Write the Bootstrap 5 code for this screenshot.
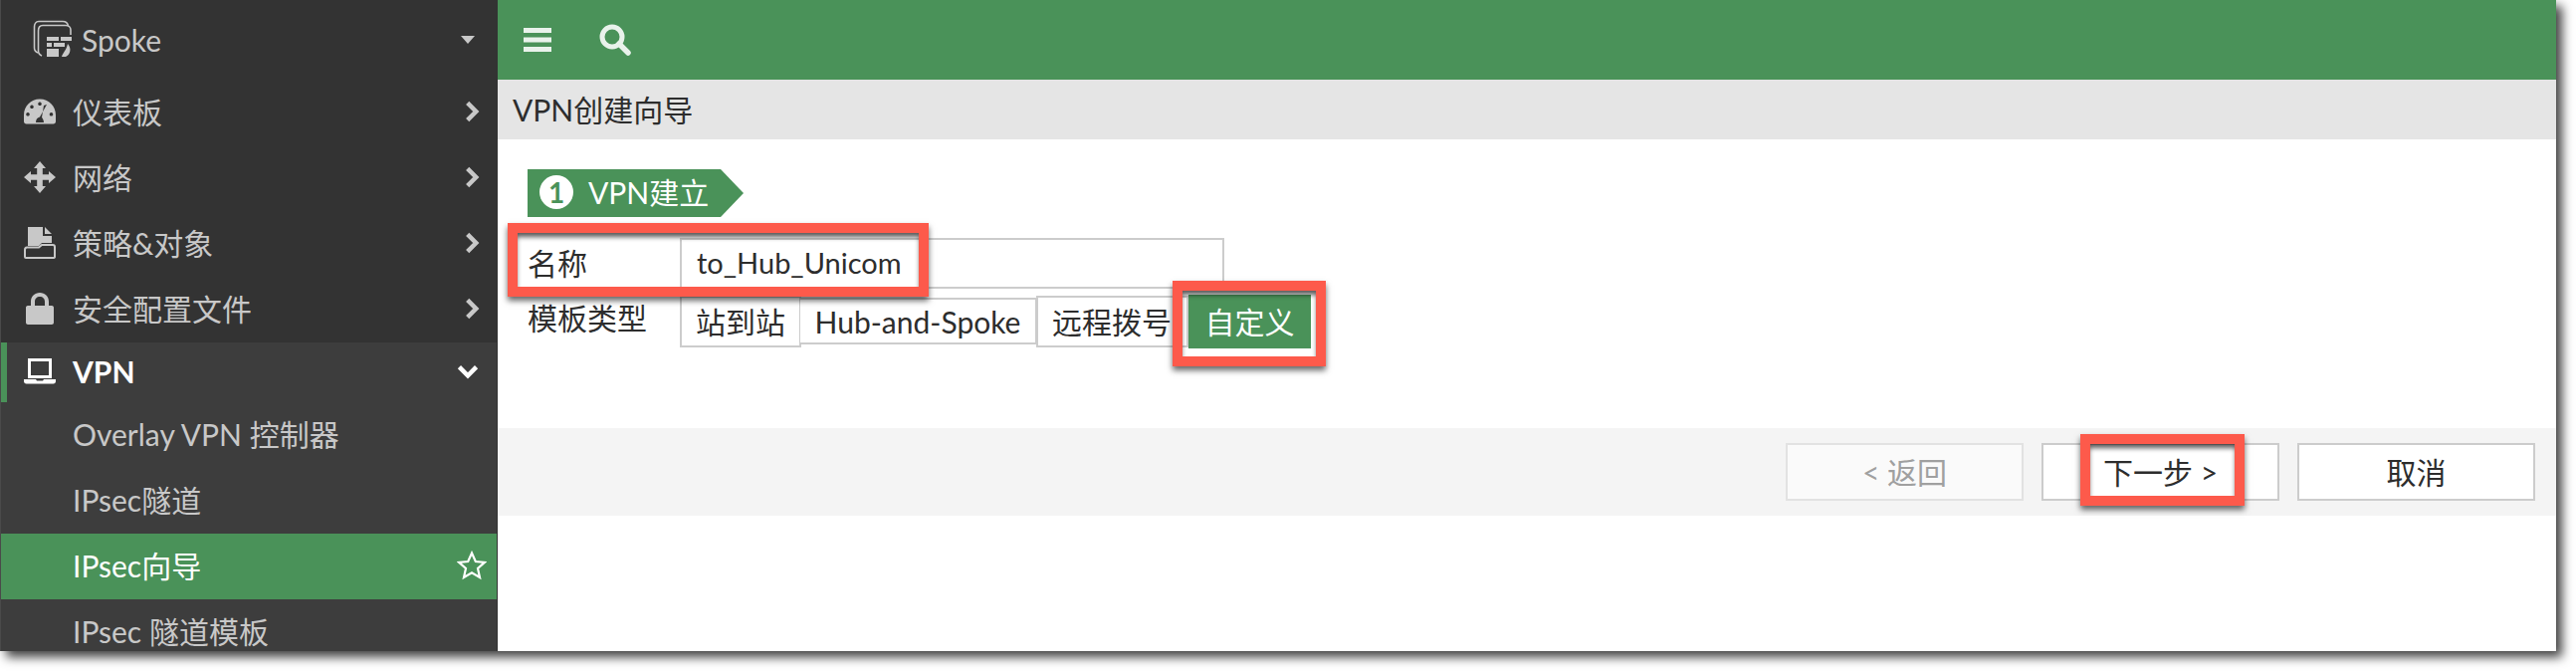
<!DOCTYPE html>
<html lang="zh-CN">
<head>
    <meta charset="UTF-8">
    <title>VPN创建向导</title>
    <link href="https://cdn.jsdelivr.net/npm/bootstrap@5.3.2/dist/css/bootstrap.min.css" rel="stylesheet">
    <style>
        :root {
            --fg-green: #4a9259;
            --side-dark: #333333;
            --side-sub: #3d3d3d;
            --side-text: #c8c8c8;
            --line: #cccccc;
            --mark-red: #fd5a4b;
        }

        html, body {
            height: 674px;
            overflow: hidden;
            background: #fff;
        }

        body {
            font-family: Lato, "Noto Sans CJK SC", sans-serif;
            font-size: 30px;
            color: #2d2d2d;
        }

        .app-shell {
            width: 2568px;
            height: 654px;
            box-shadow: 6px 6px 10px rgba(0, 0, 0, .75);
            overflow: hidden;
        }

        /* sidebar */
        .side-nav {
            width: 500px;
            flex: none;
            background: var(--side-dark);
            color: var(--side-text);
            border-left: 1px solid #4a4a4a;
            overflow: hidden;
        }

        .device-row {
            height: 80px;
            flex: none;
            padding: 0 23px 0 32px;
        }

        .device-name {
            margin-left: 9px;
            line-height: 1;
        }

        .caret-down {
            width: 0;
            height: 0;
            border-left: 7px solid transparent;
            border-right: 7px solid transparent;
            border-top: 8px solid var(--side-text);
        }

        .side-row {
            height: 66px;
            flex: none;
            padding: 0 18px 2px 23px;
            white-space: nowrap;
        }

        .side-row .row-icon {
            width: 32px;
            flex: none;
            margin-right: 17px;
            display: block;
        }

        .side-group {
            width: 498px;
            flex: none;
            background: var(--side-sub);
        }

        .group-head {
            height: 60px;
            margin-left: -1px;
            padding-left: 17px;
            border-left: 7px solid var(--fg-green);
            color: #fff;
            font-weight: 700;
        }

        .group-item {
            padding-left: 72px;
        }

        .group-item.is-active {
            background: var(--fg-green);
            color: #fff;
            padding-right: 10px;
        }

        /* main */
        .top-strip {
            height: 80px;
            flex: none;
            background: var(--fg-green);
            padding-left: 26px;
            gap: 48px;
        }

        .title-strip {
            height: 60px;
            flex: none;
            background: #e5e5e5;
            padding-left: 15px;
        }

        .wizard-body {
            height: 290px;
            flex: none;
            padding: 30px 0 0 30px;
        }

        .step-tag {
            width: 217px;
            height: 48px;
            margin-bottom: 21px;
            padding: 0 0 2px 12px;
            gap: 15px;
            background: var(--fg-green);
            color: #fff;
            clip-path: polygon(0 0, 194px 0, 100% 50%, 194px 100%, 0 100%);
        }

        .step-num {
            width: 34px;
            height: 34px;
            border-radius: 50%;
            background: #fff;
            color: var(--fg-green);
            font-size: 28px;
            font-weight: 700;
            line-height: 34px;
            text-align: center;
        }

        .field-label {
            width: 153px;
            flex: none;
        }

        .name-box {
            width: 547px;
            height: 51px;
            padding-left: 15px;
            border: 2px solid var(--line);
            font-size: 29px;
            line-height: 46px;
        }

        .type-row {
            height: 54px;
            margin-top: 7px;
        }

        .type-btn {
            --bs-btn-padding-x: 14px;
            --bs-btn-padding-y: 0;
            --bs-btn-font-size: 30px;
            --bs-btn-border-width: 2px;
            --bs-btn-border-color: var(--line);
            --bs-btn-border-radius: 0;
            --bs-btn-color: #2d2d2d;
            --bs-btn-hover-color: #2d2d2d;
            --bs-btn-hover-bg: #fff;
            --bs-btn-hover-border-color: var(--line);
            font-family: inherit;
            background: #fff;
            white-space: nowrap;
            height: 52px;
        }

        .type-btn.w-site { width: 122px; }
        .type-btn.w-hub { width: 238px; height: 47px; margin: 2px 0 0 -1px; border-left: 0; }
        .type-btn.w-remote { width: 153px; margin-left: -1px; padding-right: 0; }

        .type-btn.is-on {
            --bs-btn-color: #fff;
            --bs-btn-hover-color: #fff;
            --bs-btn-hover-bg: var(--fg-green);
            --bs-btn-border-color: var(--fg-green);
            --bs-btn-hover-border-color: var(--fg-green);
            background: var(--fg-green);
            width: 123px;
            height: 54px;
            margin-top: -1px;
        }

        .action-bar {
            height: 88px;
            flex: none;
            background: #f4f4f4;
            padding-right: 21px;
            gap: 18px;
        }

        .act-btn {
            --bs-btn-padding-y: 0;
            --bs-btn-font-size: 30px;
            --bs-btn-border-width: 2px;
            --bs-btn-border-color: var(--line);
            --bs-btn-border-radius: 0;
            --bs-btn-bg: #fff;
            --bs-btn-color: #2d2d2d;
            --bs-btn-hover-bg: #fff;
            --bs-btn-hover-color: #2d2d2d;
            --bs-btn-hover-border-color: var(--line);
            --bs-btn-disabled-color: #a0a0a0;
            --bs-btn-disabled-bg: #fafafa;
            --bs-btn-disabled-border-color: #e2e2e2;
            --bs-btn-disabled-opacity: 1;
            width: 239px;
            height: 58px;
            font-family: inherit;
        }

        /* red annotation boxes laid over the screenshot */
        .red-mark {
            position: absolute;
            border: 10px solid var(--mark-red);
            box-shadow: 0 4px 6px rgba(0, 0, 0, .6), inset 0 5px 5px -1px rgba(0, 0, 0, .65);
            pointer-events: none;
        }

        .mark-name { left: 510px; top: 224px; width: 423px; height: 74px; }
        .mark-custom { left: 1178px; top: 282px; width: 154px; height: 86px; }
        .mark-next { left: 2090px; top: 436px; width: 165px; height: 72px; }
    </style>
</head>
<body>
<div class="app-shell d-flex position-relative">
    <nav class="side-nav d-flex flex-column">
        <div class="device-row d-flex align-items-center">
            <svg width="40" height="40" viewBox="0 0 40 40" fill="none" stroke="#c8c8c8" stroke-width="1.6">
                <path d="M5 33 C2.500 32 1.500 30 1.500 28 V7 C1.500 4 3 1.500 6 1.500 H30 C33 1.500 35 3 35.500 6"/>
                <path d="M9 36 C6.500 35 5.500 33 5.500 31 V11 C5.500 8 7 5.500 10 5.500 H33 C36 5.500 38 7.500 38 10 V15"/>
                <path fill="#c8c8c8" stroke="none" d="M14 17 H26 V21 H14 Z M28 17 H39 V21 H28 Z M14 23 H19 V27 H14 Z M21 23 H32 V27 H21 Z M14 29 H26 V37 H14 Z"/>
                <path fill="#c8c8c8" stroke="none" d="M35 24 C39 28 38 35 33 37 H29 C30 33 34 30 35 24 Z"/>
            </svg>
            <span class="device-name">Spoke</span>
            <span class="caret-down ms-auto"></span>
        </div>

        <div class="side-row d-flex align-items-center">
            <svg class="row-icon" viewBox="0 0 32 26" fill="#c8c8c8"><path fill-rule="evenodd" d="M16 0.500 C7 0.500 0 7.500 0 16.500 V23 C0 24.500 1 25.500 2.500 25.500 H29.500 C31 25.500 32 24.500 32 23 V16.500 C32 7.500 25 0.500 16 0.500 Z M16 3.500 a1.800 1.800 0 1 1 -.01 0 Z M8 6.500 a1.800 1.800 0 1 1 -.01 0 Z M4 14 a1.800 1.800 0 1 1 -.01 0 Z M27.500 14 a1.800 1.800 0 1 1 -.01 0 Z M23 6 L20 7 L18 19 C20 21 20 24 20 24 H12 C12 21 13.500 19 16 18.500 Z"/></svg>
            <span>仪表板</span>
            <svg class="ms-auto" width="15" height="22" viewBox="0 0 14 20" fill="none" stroke="#c8c8c8" stroke-width="4.200"><path d="M2.500 2 L10.500 10 L2.500 18"/></svg>
        </div>
        <div class="side-row d-flex align-items-center">
            <svg class="row-icon" viewBox="0 0 32 32" fill="#c8c8c8"><path d="M16 0 L22 7 H18.800 V13.200 H25 V10 L32 16 L25 22 V18.800 H18.800 V25 H22 L16 32 L10 25 H13.200 V18.800 H7 V22 L0 16 L7 10 V13.200 H13.200 V7 H10 Z"/></svg>
            <span>网络</span>
            <svg class="ms-auto" width="15" height="22" viewBox="0 0 14 20" fill="none" stroke="#c8c8c8" stroke-width="4.200"><path d="M2.500 2 L10.500 10 L2.500 18"/></svg>
        </div>
        <div class="side-row d-flex align-items-center">
            <svg class="row-icon" viewBox="0 0 32 32" fill="#c8c8c8"><path d="M4 0 H19 V9 H28 V16 H18 L15 19 H4 Z M21 0 L28 7 H21 Z"/><path fill="none" stroke="#c8c8c8" stroke-width="2" d="M1 30 V23 C1 21.500 2 20.500 3 20.500 H15 L18 18 H29 C30.500 18 31 19 31 20 V30 C31 31 30 31 29 31 H2 C1 31 1 30.500 1 30 Z"/></svg>
            <span>策略&amp;对象</span>
            <svg class="ms-auto" width="15" height="22" viewBox="0 0 14 20" fill="none" stroke="#c8c8c8" stroke-width="4.200"><path d="M2.500 2 L10.500 10 L2.500 18"/></svg>
        </div>
        <div class="side-row d-flex align-items-center">
            <svg class="row-icon" viewBox="0 0 32 32" fill="#c8c8c8"><path d="M4 13 H7 V9 C7 3.500 11 0 16 0 C21 0 25 3.500 25 9 V13 H28 C29.500 13 30 14 30 15 V30 C30 31 29 32 28 32 H4 C3 32 2 31 2 30 V15 C2 14 2.500 13 4 13 Z M11 13 H21 V9 C21 6 19 4 16 4 C13 4 11 6 11 9 Z" fill-rule="evenodd"/></svg>
            <span>安全配置文件</span>
            <svg class="ms-auto" width="15" height="22" viewBox="0 0 14 20" fill="none" stroke="#c8c8c8" stroke-width="4.200"><path d="M2.500 2 L10.500 10 L2.500 18"/></svg>
        </div>

        <div class="side-group">
            <div class="side-row group-head d-flex align-items-center">
                <svg class="row-icon" viewBox="0 0 32 26" fill="#fff"><path d="M4 0 H28 V20 H4 Z M7 3 V17 H25 V3 Z" fill-rule="evenodd"/><path d="M0 21 H12 L13 22.500 H19 L20 21 H32 V23 C32 24.500 31 25.500 29.500 25.500 H2.500 C1 25.500 0 24.500 0 23 Z"/></svg>
                <span>VPN</span>
                <svg class="ms-auto" width="22" height="15" viewBox="0 0 20 14" fill="none" stroke="#fff" stroke-width="4.200"><path d="M2 2.500 L10 10.500 L18 2.500"/></svg>
            </div>
            <div class="side-row group-item d-flex align-items-center">Overlay VPN 控制器</div>
            <div class="side-row group-item d-flex align-items-center">IPsec隧道</div>
            <div class="side-row group-item is-active d-flex align-items-center">
                <span>IPsec向导</span>
                <svg class="ms-auto" width="30" height="30" viewBox="0 0 30 30" fill="none" stroke="#fff" stroke-width="2.200"><path d="M15 2.500 L18.800 11 L28 11.900 L21 18 L23 27 L15 22.300 L7 27 L9 18 L2 11.900 L11.200 11 Z"/></svg>
            </div>
            <div class="side-row group-item d-flex align-items-center">IPsec 隧道模板</div>
        </div>
    </nav>

    <main class="flex-grow-1 d-flex flex-column">
        <div class="top-strip d-flex align-items-center">
            <svg width="28" height="26" viewBox="0 0 28 26" fill="#e9f2eb"><rect y="1" width="28" height="5"/><rect y="10.500" width="28" height="5"/><rect y="20" width="28" height="5"/></svg>
            <svg width="32" height="32" viewBox="0 0 32 32" fill="none" stroke="#e9f2eb"><circle cx="13" cy="13" r="10" stroke-width="5"/><path d="M20 20 L29 29" stroke-width="5.500" stroke-linecap="round"/></svg>
        </div>
        <div class="title-strip d-flex align-items-center">VPN创建向导</div>
        <div class="wizard-body">
            <div class="step-tag d-flex align-items-center">
                <span class="step-num">1</span>
                <span>VPN建立</span>
            </div>
            <div class="d-flex align-items-center">
                <div class="field-label">名称</div>
                <div class="name-box">to_Hub_Unicom</div>
            </div>
            <div class="type-row d-flex align-items-start">
                <div class="field-label">模板类型</div>
                <button type="button" class="btn type-btn w-site">站到站</button>
                <button type="button" class="btn type-btn w-hub">Hub-and-Spoke</button>
                <button type="button" class="btn type-btn w-remote text-start">远程拨号</button>
                <button type="button" class="btn type-btn is-on">自定义</button>
            </div>
        </div>
        <div class="action-bar d-flex align-items-center justify-content-end">
            <button type="button" class="btn act-btn" disabled>&lt; 返回</button>
            <button type="button" class="btn act-btn">下一步 &gt;</button>
            <button type="button" class="btn act-btn">取消</button>
        </div>
    </main>

    <div class="red-mark mark-name"></div>
    <div class="red-mark mark-custom"></div>
    <div class="red-mark mark-next"></div>
</div>
<script src="https://cdn.jsdelivr.net/npm/bootstrap@5.3.2/dist/js/bootstrap.bundle.min.js"></script>
</body>
</html>
